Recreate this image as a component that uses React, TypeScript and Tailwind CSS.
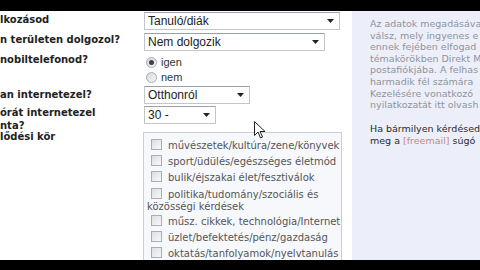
import React from "react";

const Sel = ({ w, text }: { w: number; text: string }) => (
  <div
    className="h-[18px] flex items-center justify-between border border-[#c2c6cc] border-t-[#9aa0a8] bg-white pl-[3px] pr-[5px]"
    style={{ width: w }}
  >
    <span className="text-[12px] text-[#222] leading-none" style={{ fontFamily: '"Liberation Sans", Arial, sans-serif' }}>{text}</span>
    <svg width="7" height="4" viewBox="0 0 7 4"><path d="M0 0h7L3.5 4z" fill="#222" /></svg>
  </div>
);

const Radio = ({ on }: { on?: boolean }) => (
  <span className="w-[11px] h-[11px] rounded-full border border-[#a8adb5] bg-gradient-to-br from-[#d5d8dd] to-[#f6f6f6] flex items-center justify-center">
    {on && <span className="w-[5px] h-[5px] rounded-full bg-[#3a4150]" />}
  </span>
);

const Box = () => (
  <span className="inline-block w-[11px] h-[11px] border border-[#a9aeb5] bg-gradient-to-br from-[#dcdfe3] to-[#f8f8f8] align-[-1px] mr-[6px]" />
);

const items = [
  "művészetek/kultúra/zene/könyvek",
  "sport/üdülés/egészséges életmód",
  "bulik/éjszakai élet/fesztiválok",
];

export default function App() {
  const lbl = "text-[10px] font-bold text-[#222] leading-[13px]";
  return (
    <div className="relative w-[480px] h-[270px] bg-black overflow-hidden flex flex-col" style={{ fontFamily: '"DejaVu Sans", Verdana, sans-serif' }}>
      <div className="h-[11px] shrink-0" />
      <div className="h-[249px] shrink-0 bg-white flex overflow-hidden">
        <div className="w-[352px] flex flex-col">
          <div className="flex h-[22px] shrink-0 items-start pt-[1px]">
            <div className={`w-[144px] ${lbl} pt-[1px]`}>lkozásod</div>
            <Sel w={196} text="Tanuló/diák" />
          </div>
          <div className="flex h-[24px] shrink-0 items-start">
            <div className={`w-[144px] ${lbl}`}>n területen dolgozol?</div>
            <Sel w={181} text="Nem dolgozik" />
          </div>
          <div className="flex h-[29px] shrink-0 items-start">
            <div className={`w-[144px] ${lbl} mt-[-4px]`}>nobiltelefonod?</div>
            <div className="flex flex-col pl-[2px] gap-[4px] text-[#333]" style={{ fontFamily: '"Liberation Sans", Arial, sans-serif' }}>
              <div className="flex items-center gap-[4px]"><Radio on /><span className="text-[11px] leading-none">igen</span></div>
              <div className="flex items-center gap-[4px]"><Radio /><span className="text-[11px] leading-none">nem</span></div>
            </div>
          </div>
          <div className="flex h-[20px] shrink-0 items-start">
            <div className={`w-[144px] ${lbl} pt-[2px]`}>an internetezel?</div>
            <Sel w={106} text="Otthonról" />
          </div>
          <div className="flex h-[26px] shrink-0 items-start">
            <div className={`w-[144px] ${lbl}`}>órát internetezel<br />nta?</div>
            <Sel w={72} text="30 -" />
          </div>
          <div className="flex flex-1 min-h-0 items-start">
            <div className={`w-[143px] ${lbl} mt-[-2px]`}>lődési kör</div>
            <div className="w-[199px] h-[160px] border border-[#c6cedc] border-b-0 bg-[#f6f8fc] pl-[3px] pt-[5px] text-[10px] text-[#555] leading-[16px]">
              {items.map((t) => (
                <div key={t} className="pl-[4px] whitespace-nowrap"><Box />{t}</div>
              ))}
              <div className="leading-[12px] pt-[2px]">
                <div className="pl-[4px] whitespace-nowrap"><Box />politika/tudomány/szociális és</div>
                <div>közösségi kérdések</div>
              </div>
              <div className="pl-[4px] pt-[1px] whitespace-nowrap"><Box />műsz. cikkek, technológia/Internet</div>
              <div className="pl-[4px] whitespace-nowrap"><Box />üzlet/befektetés/pénz/gazdaság</div>
              <div className="pl-[4px] whitespace-nowrap"><Box />oktatás/tanfolyamok/nyelvtanulás</div>
            </div>
          </div>
        </div>
        <div className="flex-1 bg-[#eceff9] pl-[18px] pt-[7px] text-[9.5px] leading-[11.6px] whitespace-nowrap overflow-hidden">
          <div className="text-[#8f939c]">
            <div>Az adatok megadásával</div>
            <div>válsz, mely ingyenes e</div>
            <div>ennek fejében elfogad</div>
            <div>témakörökben Direkt M</div>
            <div>postafiókjába. A felhas</div>
            <div>harmadik fél számára</div>
            <div>Kezelésére vonatkozó</div>
            <div>nyilatkozatát itt olvash</div>
          </div>
          <div className="text-[#2a2a2a] mt-[12px] leading-[12px]">
            <div>Ha bármilyen kérdésed</div>
            <div>meg a <span className="text-[#c08a8a]">[freemail]</span> súgó</div>
          </div>
        </div>
      </div>
      <div className="flex-1" />
      <svg className="absolute left-[254px] top-[121px]" width="12" height="18" viewBox="0 0 12 18">
        <path d="M0.5 0.5v14l3.5-3.5 2.5 6 2-1-2.5-5.5h5z" fill="#fff" stroke="#222" strokeWidth="1" strokeLinejoin="round" />
      </svg>
    </div>
  );
}
